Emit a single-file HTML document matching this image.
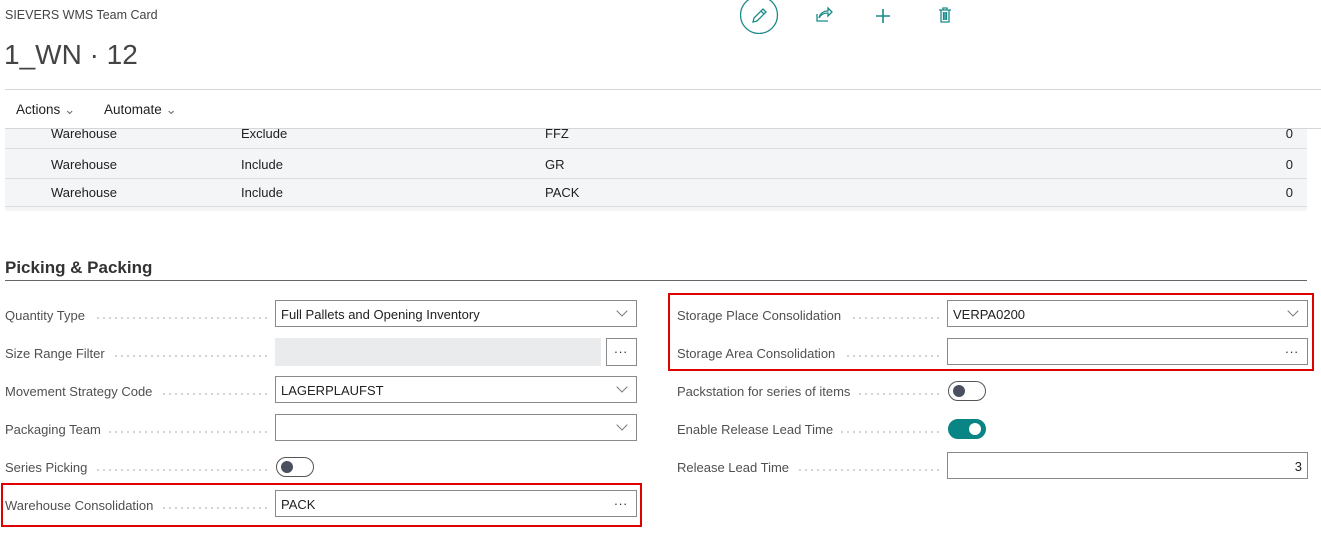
<!DOCTYPE html>
<html><head><meta charset="utf-8"><style>
body{margin:0;width:1321px;height:543px;background:#fff;font-family:"Liberation Sans",sans-serif;color:#212121;position:relative;overflow:hidden}
.a{position:absolute;white-space:nowrap}
.lbl{position:absolute;font-size:13px;color:#505050;width:262px;overflow:hidden;white-space:nowrap}
.lbl span{background:#fff;padding-right:8px;position:relative;z-index:1}
.lbl:after{content:"";position:absolute;left:0;right:0;top:9px;height:2px;background:radial-gradient(circle,#c4c4c4 0.8px,transparent 1px) 0 0/6px 2px repeat-x}
.inp{position:absolute;height:27px;border:1px solid #8a8a8a;box-sizing:border-box;font-size:13px;line-height:27px;padding-left:5px;background:#fff}
.chev{position:absolute;right:10px;top:6px;width:7px;height:7px;border-right:1px solid #777;border-bottom:1px solid #777;transform:rotate(45deg)}
.dots{position:absolute;right:8px;top:-4px;font-size:13px;letter-spacing:1px;color:#333}
.tog{position:absolute;width:38px;height:20px;border:1px solid #555;border-radius:11px;box-sizing:border-box}
.tog i{position:absolute;width:12px;height:12px;border-radius:50%;top:3px}
.row{position:absolute;left:5px;width:1302px;height:28px;font-size:13px;line-height:28px;border-bottom:1px solid #dcdcdc}
</style></head><body>
<div class="a" style="left:5px;top:8px;font-size:12.5px;color:#444">SIEVERS WMS Team Card</div>
<div class="a" style="left:4px;top:39px;font-size:28px;font-weight:300;color:#444">1_WN · 12</div>
<svg class="a" style="left:740px;top:0" width="230" height="34" viewBox="0 0 230 34" fill="none" stroke="#1a8a8a" stroke-width="1.3">
<circle cx="19" cy="15" r="18.5"/>
<path d="M13 22l1-4 9-9 3 3-9 9z M21 11l3 3"/>
<path d="M77 14v7h11 M79 18c1-5 5-7 9-7v-3l4 4-4 4v-3c-4 0-7 1-9 5z"/>
<path d="M143 9v14 M136 16h14" stroke-width="1.6"/>
<path d="M199 10h12 M203 10v-2h4v2 M201 10v12h8v-12 M203.5 12v8 M205 12v8 M206.5 12v8"/>
</svg>
<div class="a" style="left:5px;right:0;top:89px;border-top:1px solid #d6d6d6"></div>
<div class="a" style="left:16px;top:102px;font-size:13.5px">Actions <span style="color:#777">&#8964;</span></div>
<div class="a" style="left:104px;top:102px;font-size:13.5px">Automate <span style="color:#777">&#8964;</span></div>
<div class="a" style="left:5px;right:0;top:128px;border-top:1px solid #d6d6d6"></div>
<div class="a" style="left:5px;top:129px;width:1302px;height:82px;background:#f4f5f7;overflow:hidden">
<div class="row" style="top:-9px;left:0"><span class="a" style="left:46px">Warehouse</span><span class="a" style="left:236px">Exclude</span><span class="a" style="left:540px">FFZ</span><span class="a" style="right:14px">0</span></div>
<div class="row" style="top:21px;left:0;line-height:29px"><span class="a" style="left:46px">Warehouse</span><span class="a" style="left:236px">Include</span><span class="a" style="left:540px">GR</span><span class="a" style="right:14px">0</span></div>
<div class="row" style="top:49px;left:0;line-height:29px"><span class="a" style="left:46px">Warehouse</span><span class="a" style="left:236px">Include</span><span class="a" style="left:540px">PACK</span><span class="a" style="right:14px">0</span></div>
</div>
<div class="a" style="left:5px;top:258px;font-size:17px;font-weight:bold;color:#333">Picking &amp; Packing</div>
<div class="a" style="left:5px;width:1302px;top:280px;border-top:1px solid #666"></div>

<div class="lbl" style="left:5px;top:308px"><span>Quantity Type</span></div>
<div class="inp" style="left:275px;top:300px;width:362px">Full Pallets and Opening Inventory<i class="chev"></i></div>
<div class="lbl" style="left:5px;top:346px"><span>Size Range Filter</span></div>
<div class="a" style="left:275px;top:338px;width:326px;height:28px;background:#eaebec"></div>
<div class="inp" style="left:606px;top:338px;width:31px;height:28px"><span class="dots">...</span></div>
<div class="lbl" style="left:5px;top:384px"><span>Movement Strategy Code</span></div>
<div class="inp" style="left:275px;top:376px;width:362px">LAGERPLAUFST<i class="chev"></i></div>
<div class="lbl" style="left:5px;top:422px"><span>Packaging Team</span></div>
<div class="inp" style="left:275px;top:414px;width:362px"><i class="chev"></i></div>
<div class="lbl" style="left:5px;top:460px"><span>Series Picking</span></div>
<div class="tog" style="left:276px;top:457px"><i style="left:4px;background:#4a5060"></i></div>
<div class="lbl" style="left:5px;top:498px"><span>Warehouse Consolidation</span></div>
<div class="inp" style="left:275px;top:490px;width:362px">PACK<span class="dots">...</span></div>
<div class="a" style="left:1px;top:483px;width:637px;height:40px;border:2px solid #e00000"></div>

<div class="lbl" style="left:677px;top:308px"><span>Storage Place Consolidation</span></div>
<div class="inp" style="left:947px;top:300px;width:361px">VERPA0200<i class="chev"></i></div>
<div class="lbl" style="left:677px;top:346px"><span>Storage Area Consolidation</span></div>
<div class="inp" style="left:947px;top:338px;width:361px"><span class="dots">...</span></div>
<div class="a" style="left:668px;top:293px;width:642px;height:74px;border:2px solid #e00000"></div>
<div class="lbl" style="left:677px;top:384px"><span>Packstation for series of items</span></div>
<div class="tog" style="left:948px;top:381px"><i style="left:4px;background:#4a5060"></i></div>
<div class="lbl" style="left:677px;top:422px"><span>Enable Release Lead Time</span></div>
<div class="tog" style="left:948px;top:419px;background:#0a8585;border-color:#0a8585"><i style="right:4px;background:#fff"></i></div>
<div class="lbl" style="left:677px;top:460px"><span>Release Lead Time</span></div>
<div class="inp" style="left:947px;top:452px;width:361px;text-align:right;padding-right:5px">3</div>
</body></html>
